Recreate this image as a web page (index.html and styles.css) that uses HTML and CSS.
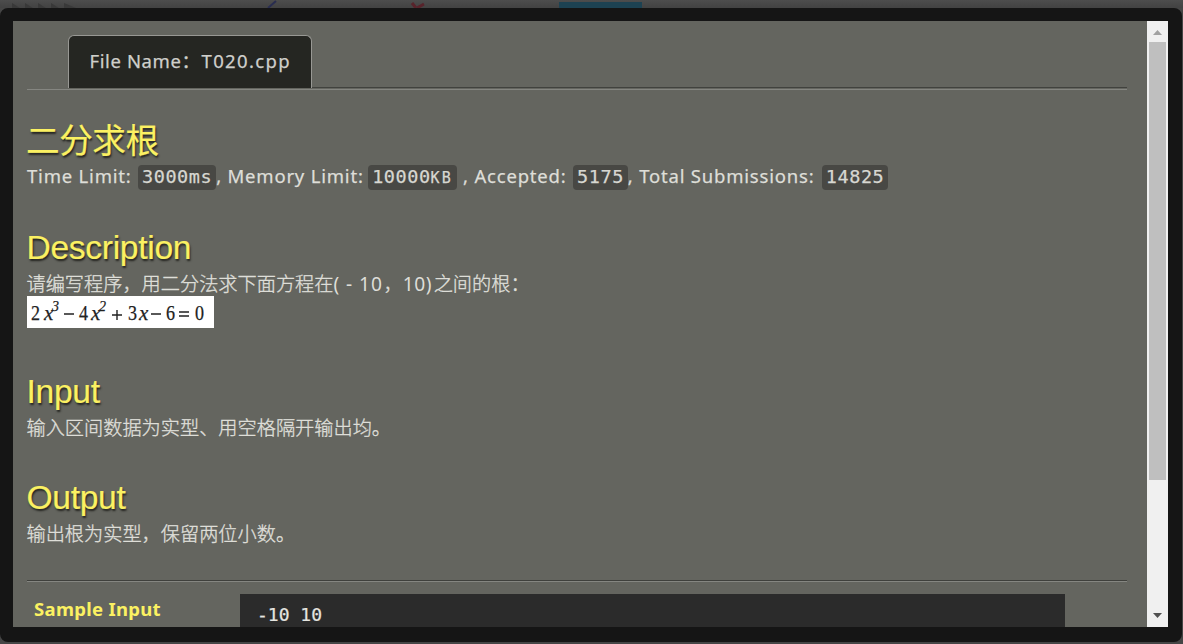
FILE: index.html
```html
<!DOCTYPE html>
<html lang="zh">
<head>
<meta charset="utf-8">
<title>T020.cpp</title>
<link rel="stylesheet" href="styles.css">
</head>
<body>
<svg class="backdrop" width="1183" height="8" aria-hidden="true">
  <path d="M12 3l8 5h-8zM25 3l8 5h-8zM38 3l8 5h-8zM51 3l8 5h-8zM64 3l12 5h-12z" fill="#393939"/>
  <path d="M268 8l8-7" stroke="#292d50" stroke-width="2"/>
  <path d="M412 3l4 5M424 4l-7 4" stroke="#58232b" stroke-width="3"/>
  <rect x="559" y="2" width="83" height="6" fill="#1d4252"/>
</svg>
<div class="dialog">
  <main class="page">
    <header class="tabs"><div class="tab"><span>File Name：</span><span class="filename">T020.cpp</span></div></header>
    <section class="problem">
      <h1 class="heading cjk">二分求根</h1>
      <div class="limits">
        <span class="label time">Time Limit:</span><code>3000ms</code>
        <span class="label memory">, Memory Limit:</span><code>10000<span class="unit">KB</span></code>
        <span class="label accepted">, Accepted:</span><code>5175</code>
        <span class="label total">, Total Submissions:</span><code>14825</code>
      </div>
    </section>
    <section class="description">
      <h2 class="heading">Description</h2>
      <p class="copy">请编写程序，用二分法求下面方程在<span class="range">( - 10</span>，<span class="ten">10)</span>之间的根：</p>
      <svg class="equation" width="187" height="32" viewBox="0 0 187 32">
        <g class="digits"><text x="4" y="24" textLength="9" lengthAdjust="spacingAndGlyphs">2</text><text x="52" y="24" textLength="9" lengthAdjust="spacingAndGlyphs">4</text><text x="101" y="24" textLength="9" lengthAdjust="spacingAndGlyphs">3</text><text x="139" y="24" textLength="9" lengthAdjust="spacingAndGlyphs">6</text><text x="168" y="24" textLength="9" lengthAdjust="spacingAndGlyphs">0</text></g>
        <g class="variables"><text x="17" y="24">x</text><text x="64" y="24">x</text><text x="112" y="24">x</text></g>
        <g class="powers"><text x="25" y="15">3</text><text x="72" y="15">2</text></g>
        <path d="M37 18h10M85 19h10M90 14v10M124 18h10M152 16h10M152 20h10" stroke="#222" stroke-width="1.4"/>
      </svg>
    </section>
    <section class="input">
      <h2 class="heading">Input</h2>
      <p class="copy">输入区间数据为实型、用空格隔开输出均。</p>
    </section>
    <section class="output">
      <h2 class="heading">Output</h2>
      <p class="copy">输出根为实型，保留两位小数。</p>
    </section>
    <section class="sample">
      <h3>Sample Input</h3>
      <pre>-10 10</pre>
    </section>
  </main>
  <aside class="scrollbar">
    <svg width="21" height="21"><path d="M6 14l4.5-5 4.5 5z" fill="#a1a1a1"/></svg>
    <div class="thumb"></div>
    <svg class="down" width="21" height="21"><path d="M6 7h9l-4.5 5z" fill="#505050"/></svg>
  </aside>
</div>
</body>
</html>
```
FILE: styles.css
```css
* { box-sizing: border-box; }
body { margin: 0; width: 1183px; height: 644px; overflow: hidden; background: #454545; font-family: "Noto Sans", "Noto Sans CJK SC", sans-serif; color: #deded8; }
.backdrop { display: block; background: linear-gradient(#4d4d4d, #424242); }
.dialog { display: flex; height: 634px; width: 1182px; border: 13px solid #151515; border-right-width: 14px; border-bottom-width: 15px; border-radius: 8px; background: #151515; }
.page { width: 1134px; height: 606px; overflow: hidden; background: #64655f; padding: 14px 20px 0 14px; }
.tabs { height: 55px; padding-left: 41px; border-bottom: 1px solid #858681; background: linear-gradient(#41423e, #41423e) 285px 52px / 100% 1px no-repeat; }
.tab { display: flex; width: 244px; height: 53px; border: 1px solid #989894; border-bottom: 0; border-radius: 6px 6px 0 0; background: #252622; padding-left: 20.5px; font-size: 18.5px; line-height: 49px; letter-spacing: .6px; color: #cfcfcb; -webkit-text-stroke: .25px; }
.tab span:first-child { width: 112px; flex: none; white-space: nowrap; }
.tab .filename { letter-spacing: 1.35px; }
.heading { margin: 0 0 0 -.5px; height: 39px; font: 400 33.6px/39px "Liberation Sans", "Noto Sans CJK SC", sans-serif; letter-spacing: -.3px; color: #fbf162; text-shadow: 1px 2px 2px #22221e; -webkit-text-stroke: .2px; }
.heading.cjk { margin-left: -1px; letter-spacing: -.4px; line-height: 39px; }
.problem { padding-top: 32px; height: 138px; }
.limits { display: flex; height: 33px; align-items: center; white-space: nowrap; font-size: 18.5px; letter-spacing: .8px; -webkit-text-stroke: .25px; }
.label { flex: none; height: 33px; line-height: 29px; }
.time { width: 111px; }
.memory { width: 152px; }
.accepted { width: 116px; padding-left: 6px; }
.total { width: 194px; }
code { display: block; flex: none; height: 25px; padding: 0 4px; border-radius: 4px; background: #484844; color: #d7d7d1; font: 18.5px/24px "DejaVu Sans Mono", monospace; letter-spacing: .55px; }
.unit { font-size: 15px; letter-spacing: 2.2px; }
.description { height: 144px; }
.copy { margin: 0 0 0 -.5px; height: 29px; font: 300 19.2px/33px "Noto Sans", "Noto Sans CJK SC", sans-serif; white-space: nowrap; -webkit-text-stroke: .35px; }
.range { display: inline-block; width: 50px; letter-spacing: .9px; font-weight: 400; -webkit-text-stroke: 0; }
.ten { display: inline-block; width: 31px; letter-spacing: .5px; font-weight: 400; -webkit-text-stroke: 0; }
.equation { display: block; background: #fff; fill: #222; font-family: "Liberation Serif", serif; }
.digits { font-size: 21px; stroke: #222; stroke-width: .25px; }
.variables { font-size: 21px; font-style: italic; stroke: #222; stroke-width: .25px; }
.powers { font-size: 14px; font-style: italic; stroke: #222; stroke-width: .25px; }
.input { height: 106px; }
.output { height: 102px; }
.sample { display: flex; height: 70px; border-top: 1px solid #3f403c; box-shadow: inset 0 1px #858681; padding-top: 13px; }
.sample h3 { width: 213px; margin: 0; padding-left: 7px; font-size: 18.5px; line-height: 29px; letter-spacing: .3px; color: #fbf162; }
.sample pre { width: 825px; height: 60px; margin: 0; padding: 0 17px; background: #2b2b2b; font: 18px/42px "DejaVu Sans Mono", monospace; color: #e5e5e0; -webkit-text-stroke: .2px; }
.scrollbar { display: flex; flex-direction: column; width: 21px; height: 606px; background: #f0f0f0; }
.scrollbar svg { display: block; flex: none; }
.thumb { width: 17px; height: 438px; margin-left: 2px; background: #bfbfbf; }
.scrollbar .down { margin-top: auto; }
```
